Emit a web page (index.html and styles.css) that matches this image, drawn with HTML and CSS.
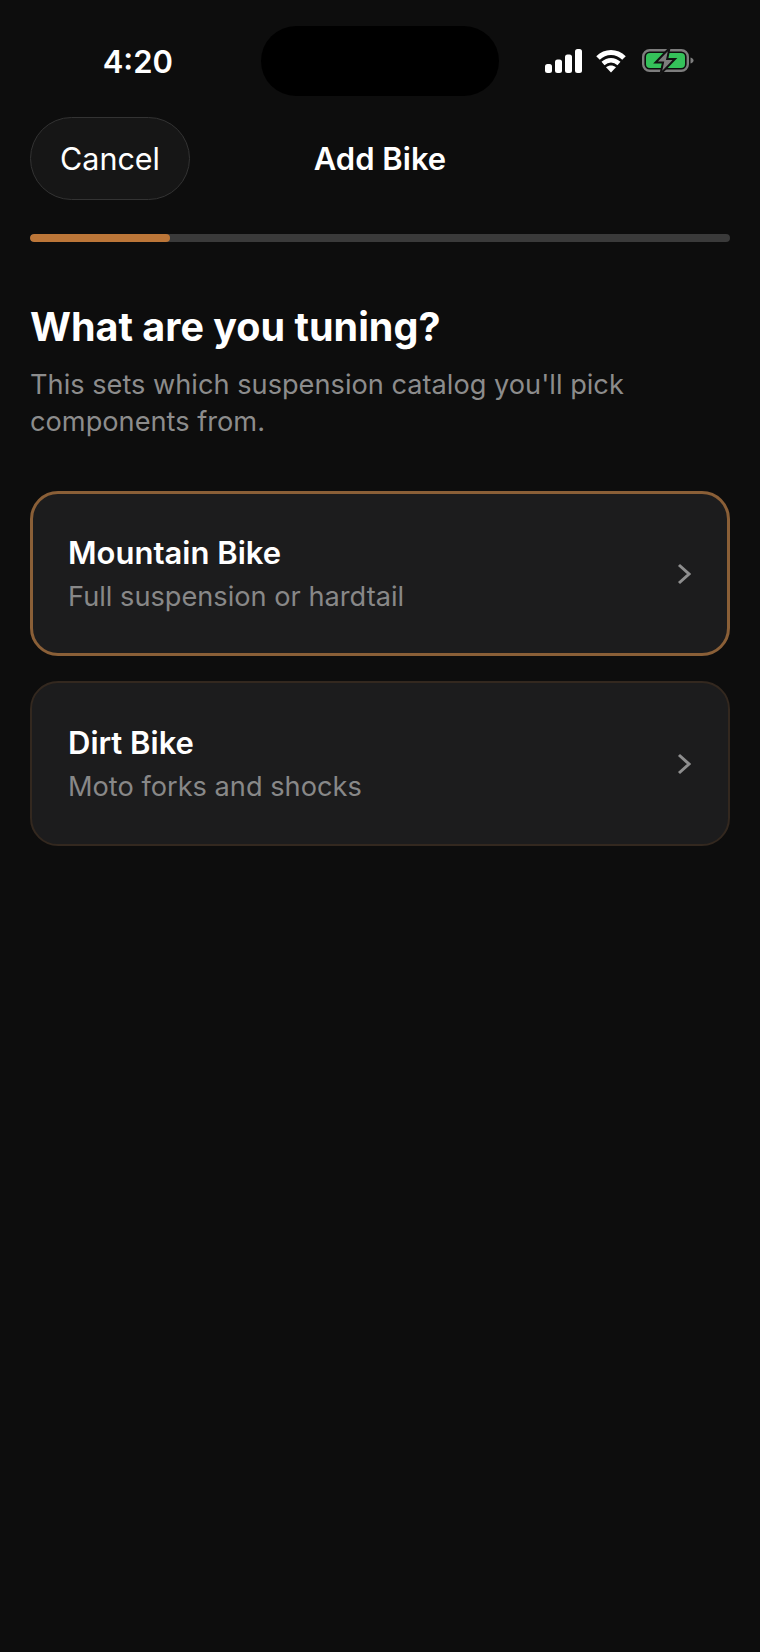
FILE: index.html
```html
<!DOCTYPE html>
<html lang="en">
<head>
    <meta charset="UTF-8">
    <meta name="viewport" content="width=device-width, initial-scale=1.0">
    <title>Add Bike</title>
    <link rel="stylesheet" href="styles.css">
</head>
<body>

<!-- status bar -->
<div class="status-bar">
    <div class="status-time">4:20</div>
    <div class="island"></div>
    <div class="status-icons">
        <svg class="icon-signal" width="37" height="24" viewBox="0 0 37 24">
            <rect x="0" y="15" width="7" height="9" rx="2.5" fill="#fff"/>
            <rect x="10" y="10.5" width="7" height="13.5" rx="2.5" fill="#fff"/>
            <rect x="20" y="5.5" width="7" height="18.5" rx="2.5" fill="#fff"/>
            <rect x="30" y="0" width="7" height="24" rx="2.5" fill="#fff"/>
        </svg>
        <svg class="icon-wifi" width="32" height="24" viewBox="0 0 32 24">
            <path d="M3 9C10.500 1.500 21.500 1.500 29 9" fill="none" stroke="#fff" stroke-width="5"/>
            <path d="M8 14.500C12.800 10.200 19.200 10.200 24 14.500" fill="none" stroke="#fff" stroke-width="4.500"/>
            <path d="M16 23.500L11 18.300C14.200 16 17.800 16 21 18.300Z" fill="#fff"/>
        </svg>
        <svg class="icon-battery" width="52" height="28" viewBox="0 0 52 28">
            <rect x="1.200" y="3.200" width="44.600" height="20.600" rx="6.500" fill="none" stroke="#7d7d7d" stroke-width="2.400"/>
            <rect x="4" y="6" width="39" height="15" rx="4" fill="#35c15a"/>
            <path d="M48.500 10.500C50.500 11 51.500 12.200 51.500 13.500C51.500 14.800 50.500 16 48.500 16.500Z" fill="#7d7d7d"/>
            <path d="M27.500 1L13.500 15.500H21L18.500 27L33 12H25.200Z" fill="#7d7d7d" stroke="#111" stroke-width="2"/>
        </svg>
    </div>
</div>

<!-- nav -->
<div class="nav">
    <button class="cancel-btn" type="button">Cancel</button>
    <div class="nav-title">Add Bike</div>
</div>

<div class="progress">
    <div class="progress-fill" style="width: 20%"></div>
</div>

<div class="content">
    <h1>What are you tuning?</h1>
    <p class="subtitle">This sets which suspension catalog you'll pick components from.</p>

    <div class="option selected">
        <div class="option-text">
            <div class="option-title">Mountain Bike</div>
            <div class="option-desc">Full suspension or hardtail</div>
        </div>
        <svg class="chevron" width="14" height="22" viewBox="0 0 14 22">
            <path d="M2 2L12 11L2 20" fill="none" stroke="#8e8e8e" stroke-width="3"/>
        </svg>
    </div>

    <div class="option">
        <div class="option-text">
            <div class="option-title">Dirt Bike</div>
            <div class="option-desc">Moto forks and shocks</div>
        </div>
        <svg class="chevron" width="14" height="22" viewBox="0 0 14 22">
            <path d="M2 2L12 11L2 20" fill="none" stroke="#8e8e8e" stroke-width="3"/>
        </svg>
    </div>
</div>

</body>
</html>
```

FILE: styles.css
```css
body {
    font-family: Inter, "Noto Sans", sans-serif;
    background: #0d0d0d;
    color: #fff;
    margin: 0;
    height: 1652px;
    overflow: hidden;
}

/* status bar */
.status-bar {
    height: 70px;
    padding-top: 26px;
    display: flex;
    align-items: center;
    position: relative;
}

.status-time {
    width: 261px;
    padding-right: 88px;
    box-sizing: border-box;
    text-align: right;
    font-size: 31px;
    font-weight: 600;
}

.island {
    width: 238px;
    height: 70px;
    background: #000;
    border-radius: 35px;
}

.status-icons {
    margin-left: 46px;
    display: flex;
    align-items: center;
    gap: 13px;
}

.icon-battery {
    margin-left: 2px;
}

/* nav */
.nav {
    margin-top: 21px;
    padding: 0 30px;
    height: 83px;
    display: flex;
    align-items: center;
    position: relative;
}

.cancel-btn {
    width: 160px;
    height: 83px;
    background: #161616;
    border: 1.5px solid #333;
    border-radius: 42px;
    color: #fff;
    font-family: inherit;
    font-size: 30.5px;
    padding: 0;
}

.nav-title {
    position: absolute;
    left: 0;
    right: 0;
    text-align: center;
    font-size: 31px;
    font-weight: 600;
}

.progress {
    margin: 34px 30px 0;
    height: 8px;
    background: #3a3a3a;
    border-radius: 4px;
    overflow: hidden;
}

.progress-fill {
    height: 100%;
    background: #bc7638;
    border-radius: 4px;
}

.content {
    padding: 0 30px;
}

h1 {
    margin: 61px 0 0;
    font-size: 39.5px;
    line-height: 48px;
    font-weight: 700;
}

.subtitle {
    margin: 15px 0 51px;
    font-size: 27.2px;
    line-height: 37px;
    color: #8c8c8c;
}

.option {
    height: 165px;
    box-sizing: border-box;
    padding: 0 37px 0 36px;
    margin-bottom: 25px;
    background: #1c1c1d;
    border: 2px solid #33281f;
    border-radius: 28px;
    display: flex;
    align-items: center;
    justify-content: space-between;
}

.option.selected {
    padding: 0 36px 0 35px;
    border: 3px solid #8a5f37;
}

.option-text {
    padding-top: 2px;
}

.option-title {
    font-size: 31px;
    line-height: 38px;
    font-weight: 600;
}

.option-desc {
    margin-top: 7px;
    font-size: 27.2px;
    line-height: 36px;
    color: #888;
}
```
